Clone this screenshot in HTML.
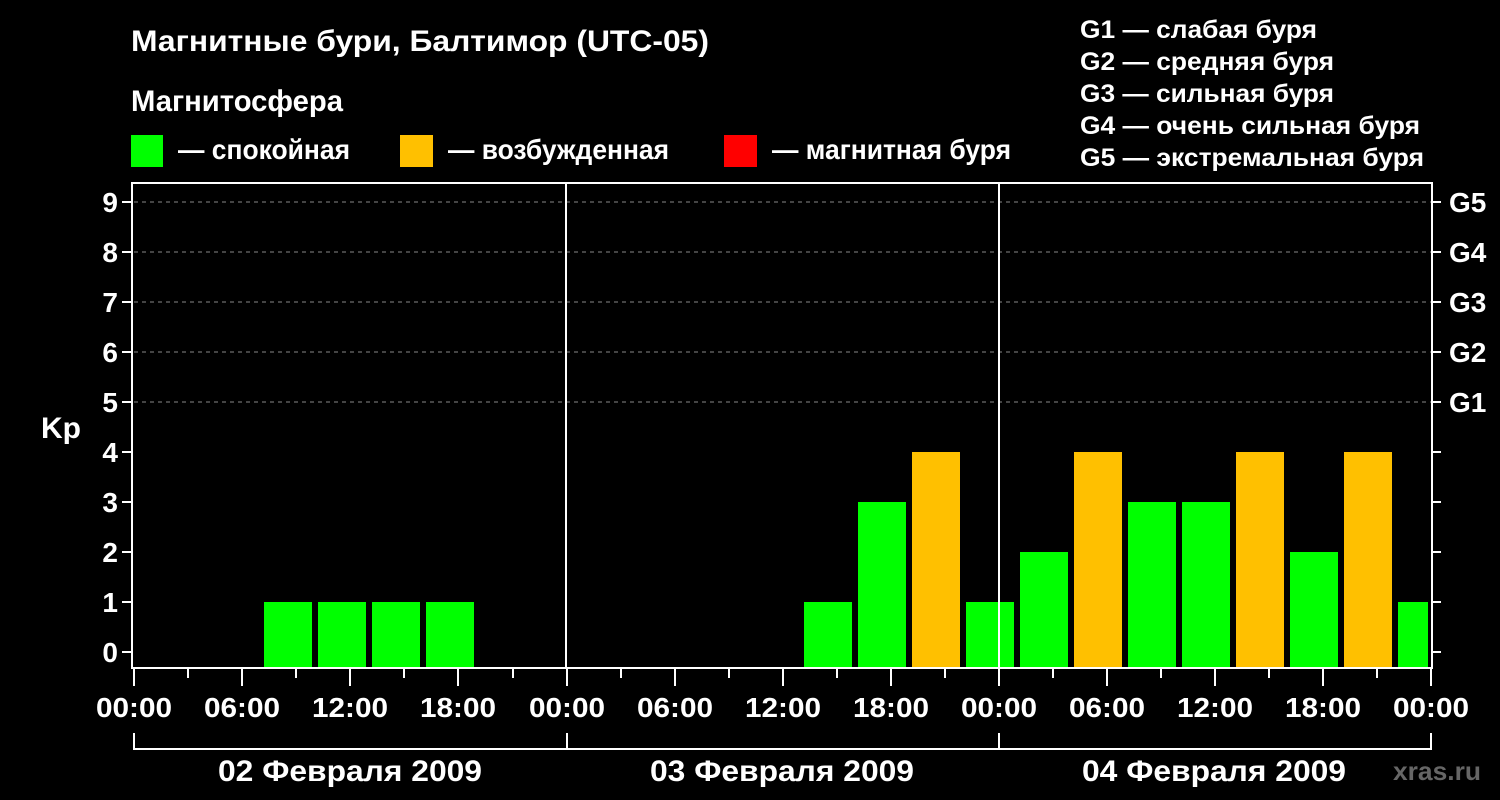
<!DOCTYPE html>
<html><head><meta charset="utf-8"><style>
html,body{margin:0;padding:0;background:#000;width:1500px;height:800px;overflow:hidden}
svg{display:block}
text{font-family:"Liberation Sans",Arial,sans-serif;font-weight:bold;fill:#fff}
</style></head><body>
<svg width="1500" height="800" viewBox="0 0 1500 800">
<rect width="1500" height="800" fill="#000"/>
<text x="131" y="51" font-size="30" textLength="578" lengthAdjust="spacingAndGlyphs">Магнитные бури, Балтимор (UTC-05)</text>
<text x="131" y="111" font-size="30" textLength="212" lengthAdjust="spacingAndGlyphs">Магнитосфера</text>
<rect x="131" y="135" width="32" height="32" fill="#00ff00"/>
<text x="178" y="159" font-size="28" textLength="172" lengthAdjust="spacingAndGlyphs">— спокойная</text>
<rect x="400" y="135" width="33" height="32" fill="#ffc000"/>
<text x="448" y="159" font-size="28" textLength="221" lengthAdjust="spacingAndGlyphs">— возбужденная</text>
<rect x="724" y="135" width="33" height="32" fill="#ff0000"/>
<text x="772" y="159" font-size="28" textLength="239" lengthAdjust="spacingAndGlyphs">— магнитная буря</text>
<g font-size="25">
<text x="1080" y="38" textLength="237" lengthAdjust="spacingAndGlyphs">G1 — слабая буря</text>
<text x="1080" y="70" textLength="254" lengthAdjust="spacingAndGlyphs">G2 — средняя буря</text>
<text x="1080" y="102" textLength="254" lengthAdjust="spacingAndGlyphs">G3 — сильная буря</text>
<text x="1080" y="134" textLength="340" lengthAdjust="spacingAndGlyphs">G4 — очень сильная буря</text>
<text x="1080" y="166" textLength="344" lengthAdjust="spacingAndGlyphs">G5 — экстремальная буря</text>
</g>
<g stroke="#888" stroke-width="1" stroke-dasharray="4,4">
<line x1="134" y1="202" x2="1431" y2="202"/>
<line x1="134" y1="252" x2="1431" y2="252"/>
<line x1="134" y1="302" x2="1431" y2="302"/>
<line x1="134" y1="352" x2="1431" y2="352"/>
<line x1="134" y1="402" x2="1431" y2="402"/>
</g>
<g fill="#00ff00">
<rect x="264" y="602" width="48" height="66"/>
<rect x="318" y="602" width="48" height="66"/>
<rect x="372" y="602" width="48" height="66"/>
<rect x="426" y="602" width="48" height="66"/>
<rect x="804" y="602" width="48" height="66"/>
<rect x="858" y="502" width="48" height="166"/>
<rect x="966" y="602" width="48" height="66"/>
<rect x="1020" y="552" width="48" height="116"/>
<rect x="1128" y="502" width="48" height="166"/>
<rect x="1182" y="502" width="48" height="166"/>
<rect x="1290" y="552" width="48" height="116"/>
<rect x="1398" y="602" width="30" height="66"/>
</g>
<g fill="#ffc000">
<rect x="912" y="452" width="48" height="216"/>
<rect x="1074" y="452" width="48" height="216"/>
<rect x="1236" y="452" width="48" height="216"/>
<rect x="1344" y="452" width="48" height="216"/>
</g>
<g stroke="#fff" stroke-width="2" fill="none">
<rect x="132" y="183" width="1300" height="485"/>
<line x1="566" y1="183" x2="566" y2="668"/>
<line x1="999" y1="183" x2="999" y2="668"/>
<path d="M122 202H132M122 252H132M122 302H132M122 352H132M122 402H132M122 452H132M122 502H132M122 552H132M122 602H132M122 652H132"/>
<path d="M1432 202H1441M1432 252H1441M1432 302H1441M1432 352H1441M1432 402H1441M1432 452H1441M1432 502H1441M1432 552H1441M1432 602H1441M1432 652H1441"/>
<path d="M134 668V686M188 668V678M242 668V686M296 668V678M350 668V686M404 668V678M458 668V686M513 668V678M567 668V686M621 668V678M675 668V686M729 668V678M783 668V686M837 668V678M891 668V686M945 668V678M999 668V686M1053 668V678M1107 668V686M1161 668V678M1215 668V686M1269 668V678M1323 668V686M1377 668V678M1431 668V686"/>
<path d="M134 733V749H1431V733M567 733V749M999 733V749"/>
</g>
<g font-size="28" text-anchor="end">
<text x="118" y="212">9</text><text x="118" y="262">8</text><text x="118" y="312">7</text><text x="118" y="362">6</text><text x="118" y="412">5</text><text x="118" y="462">4</text><text x="118" y="512">3</text><text x="118" y="562">2</text><text x="118" y="612">1</text><text x="118" y="662">0</text>
</g>
<text x="41" y="438" font-size="30">Kp</text>
<g font-size="28">
<text x="1449" y="212">G5</text><text x="1449" y="262">G4</text><text x="1449" y="312">G3</text><text x="1449" y="362">G2</text><text x="1449" y="412">G1</text>
</g>
<g font-size="28" text-anchor="middle">
<text x="134" y="717" textLength="76" lengthAdjust="spacingAndGlyphs">00:00</text><text x="242" y="717" textLength="76" lengthAdjust="spacingAndGlyphs">06:00</text><text x="350" y="717" textLength="76" lengthAdjust="spacingAndGlyphs">12:00</text><text x="458" y="717" textLength="76" lengthAdjust="spacingAndGlyphs">18:00</text>
<text x="567" y="717" textLength="76" lengthAdjust="spacingAndGlyphs">00:00</text><text x="675" y="717" textLength="76" lengthAdjust="spacingAndGlyphs">06:00</text><text x="783" y="717" textLength="76" lengthAdjust="spacingAndGlyphs">12:00</text><text x="891" y="717" textLength="76" lengthAdjust="spacingAndGlyphs">18:00</text>
<text x="999" y="717" textLength="76" lengthAdjust="spacingAndGlyphs">00:00</text><text x="1107" y="717" textLength="76" lengthAdjust="spacingAndGlyphs">06:00</text><text x="1215" y="717" textLength="76" lengthAdjust="spacingAndGlyphs">12:00</text><text x="1323" y="717" textLength="76" lengthAdjust="spacingAndGlyphs">18:00</text><text x="1431" y="717" textLength="76" lengthAdjust="spacingAndGlyphs">00:00</text>
</g>
<g font-size="30" text-anchor="middle">
<text x="350" y="781" textLength="264" lengthAdjust="spacingAndGlyphs">02 Февраля 2009</text>
<text x="782" y="781" textLength="264" lengthAdjust="spacingAndGlyphs">03 Февраля 2009</text>
<text x="1214" y="781" textLength="264" lengthAdjust="spacingAndGlyphs">04 Февраля 2009</text>
</g>
<text x="1393" y="780" font-size="26" style="fill:#666" textLength="88" lengthAdjust="spacingAndGlyphs">xras.ru</text>
</svg>
</body></html>
